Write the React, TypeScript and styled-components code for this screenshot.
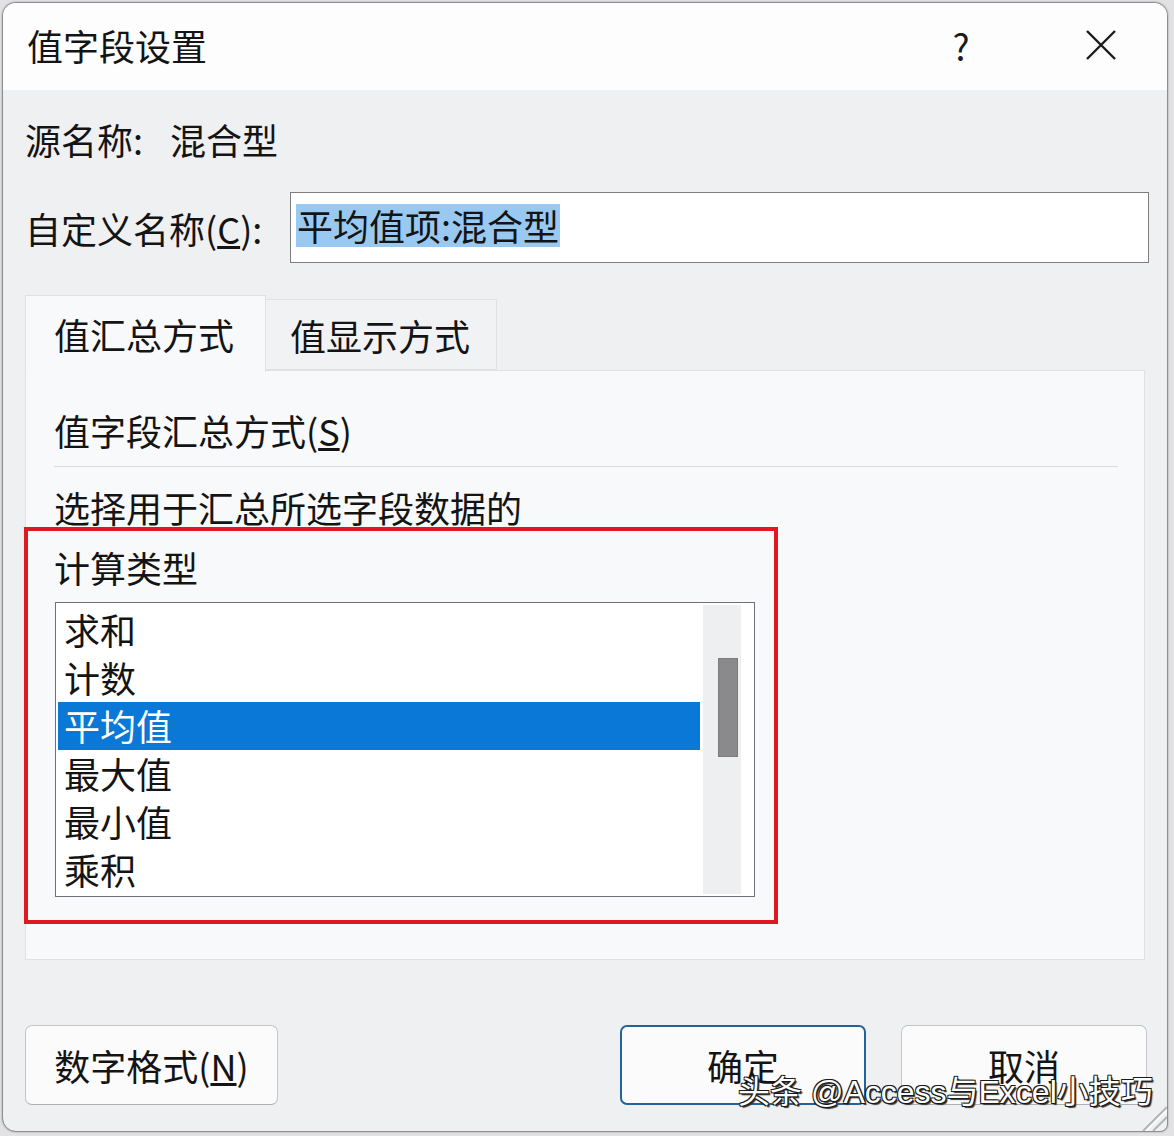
import * as React from "react";
import styled, { createGlobalStyle } from "styled-components";

const GlobalStyle = createGlobalStyle`
  html, body {
    margin: 0;
    padding: 0;
    background: #e2e2e5;
  }
  body {
    padding: 2px;
    font-family: "Noto Sans CJK SC", "Liberation Sans", sans-serif;
    color: #141414;
  }
`;

const items = ["求和", "计数", "平均值", "最大值", "最小值", "乘积"];

const Dialog = styled.div`
  position: relative;
  box-sizing: border-box;
  width: 1166px;
  height: 1130px;
  border: 1px solid #8d8d92;
  border-radius: 14px 14px 8px 14px;
  box-shadow: 0 0 2px rgba(0, 0, 0, 0.35);
  background: #eff0f2;
  overflow: hidden;
  display: flex;
  flex-direction: column;
  font-size: 36px;
`;

const TitleBar = styled.div`
  height: 87px;
  flex: 0 0 auto;
  background: #fdfdfd;
  display: flex;
  align-items: center;
  gap: 50px;
  padding: 0 21px 0 24px;
`;

const Title = styled.div`
  flex: 1;
  line-height: 1;
  margin-top: -4px;
`;

const TitleButton = styled.div`
  width: 90px;
  display: flex;
  justify-content: center;
  align-items: center;
  line-height: 1;
  color: #1a1a1a;
  margin-top: -3px;
`;

const Body = styled.div`
  flex: 1;
  display: flex;
  flex-direction: column;
  padding: 0 22px;
`;

const SourceRow = styled.div`
  margin-top: 19px;
  height: 60px;
  display: flex;
  align-items: center;
`;

const SourceLabel = styled.span`
  width: 145px;
`;

const CustomRow = styled.div`
  margin-top: 23px;
  margin-right: -4px;
  display: grid;
  grid-template-columns: 265px 1fr;
  align-items: center;
`;

const Input = styled.div`
  box-sizing: border-box;
  height: 71px;
  background: #ffffff;
  border: 1px solid #7d7d82;
  padding: 6px 0 0 5px;
`;

const Selected = styled.span`
  display: inline-block;
  background: #99c9f1;
  line-height: 43px;
  padding: 0 1px;
`;

const TabStrip = styled.div`
  margin-top: 32px;
  height: 75px;
  display: flex;
  align-items: flex-end;
  position: relative;
  z-index: 1;
`;

const Tab = styled.div<{ $active?: boolean }>`
  box-sizing: border-box;
  width: ${(p) => (p.$active ? 241 : 231)}px;
  height: ${(p) => (p.$active ? 77 : 71)}px;
  margin-bottom: ${(p) => (p.$active ? -2 : 0)}px;
  padding-left: ${(p) => (p.$active ? 28 : 24)}px;
  display: flex;
  align-items: center;
  background: ${(p) => (p.$active ? "#f8f9fa" : "#f1f2f4")};
  border: 1px solid ${(p) => (p.$active ? "#dfe0e2" : "#e0e1e3")};
  border-bottom: ${(p) => (p.$active ? "none" : "1px solid #e0e1e3")};
  border-left: ${(p) => (p.$active ? "1px solid #dfe0e2" : "none")};
`;

const Panel = styled.div`
  position: relative;
  box-sizing: border-box;
  height: 590px;
  background: #f8f9fa;
  border: 1px solid #e0e1e3;
  padding: 35px 26px 0 28px;
  display: flex;
  flex-direction: column;
`;

const Line = styled.div<{ $gap?: number }>`
  line-height: 48px;
  height: 48px;
  margin-top: ${(p) => p.$gap ?? 0}px;
  white-space: nowrap;
`;

const Separator = styled.div`
  margin-top: 12px;
  height: 1px;
  background: #d9dadc;
`;

const ListBox = styled.div`
  margin-top: 11px;
  box-sizing: border-box;
  width: 700px;
  height: 295px;
  margin-left: 1px;
  background: #ffffff;
  border: 1px solid #6f7079;
  display: flex;
  padding: 3px 0 0 2px;
`;

const ListItems = styled.div`
  width: 642px;
  display: flex;
  flex-direction: column;
`;

const ListItem = styled.div<{ $selected?: boolean }>`
  height: 48px;
  line-height: 47px;
  padding-left: 6px;
  background: ${(p) => (p.$selected ? "#0a78d6" : "transparent")};
  color: ${(p) => (p.$selected ? "#ffffff" : "#141414")};
`;

const ScrollTrack = styled.div`
  margin: -1px 0 2px 3px;
  width: 38px;
  background: #eeeff0;
  display: flex;
  justify-content: flex-end;
  padding-right: 3px;
  box-sizing: border-box;
`;

const ScrollThumb = styled.div`
  margin-top: 53px;
  width: 20px;
  height: 99px;
  background: #8a8a8c;
  border: 1px solid #7c7c7e;
  box-sizing: border-box;
`;

const Highlight = styled.div`
  position: absolute;
  left: -2px;
  top: 156px;
  width: 754px;
  height: 397px;
  box-sizing: border-box;
  border: 4px solid #e01820;
  pointer-events: none;
`;

const ButtonRow = styled.div`
  margin-top: 65px;
  display: flex;
  gap: 35px;
  margin-right: -2px;
`;

const Button = styled.div<{ $primary?: boolean; $w: number }>`
  box-sizing: border-box;
  width: ${(p) => p.$w}px;
  height: 80px;
  border-radius: 7px;
  background: #fbfbfc;
  border: ${(p) => (p.$primary ? "2px solid #22639f" : "1px solid #c4c5c8")};
  border-bottom-color: ${(p) => (p.$primary ? "#22639f" : "#aeafb2")};
  display: flex;
  align-items: center;
  justify-content: center;
  line-height: 1;
`;

const Spacer = styled.div`
  flex: 1;
`;

const Watermark = styled.div`
  position: absolute;
  left: 735px;
  top: 1069px;
  line-height: 40px;
  font-family: "Liberation Sans", "Noto Sans CJK SC", sans-serif;
  font-size: 32px;
  color: #ffffff;
  white-space: nowrap;
  text-shadow: 1px 1px 0 #1a1a1a, -1px -1px 0 #1a1a1a, 1px -1px 0 #1a1a1a,
    -1px 1px 0 #1a1a1a, 2px 2px 1px #333;
`;

const Grip = styled.svg`
  position: absolute;
  right: 0;
  bottom: 0;
`;

function CloseIcon() {
  return (
    <svg width="32" height="30" viewBox="0 0 32 30">
      <path d="M2 1 L30 29 M30 1 L2 29" stroke="#1a1a1a" strokeWidth="2.4" fill="none" />
    </svg>
  );
}

export default function App() {
  return (
    <>
      <GlobalStyle />
      <Dialog>
        <TitleBar>
          <Title>值字段设置</Title>
          <TitleButton>?</TitleButton>
          <TitleButton>
            <CloseIcon />
          </TitleButton>
        </TitleBar>
        <Body>
          <SourceRow>
            <SourceLabel>源名称:</SourceLabel>
            <span>混合型</span>
          </SourceRow>
          <CustomRow>
            <span>
              自定义名称(<u>C</u>):
            </span>
            <Input>
              <Selected>平均值项:混合型</Selected>
            </Input>
          </CustomRow>
          <TabStrip>
            <Tab $active>值汇总方式</Tab>
            <Tab>值显示方式</Tab>
          </TabStrip>
          <Panel>
            <Line>
              值字段汇总方式(<u>S</u>)
            </Line>
            <Separator />
            <Line $gap={16}>选择用于汇总所选字段数据的</Line>
            <Line $gap={12}>计算类型</Line>
            <ListBox>
              <ListItems>
                {items.map((item) => (
                  <ListItem key={item} $selected={item === "平均值"}>
                    {item}
                  </ListItem>
                ))}
              </ListItems>
              <ScrollTrack>
                <ScrollThumb />
              </ScrollTrack>
            </ListBox>
            <Highlight />
          </Panel>
          <ButtonRow>
            <Button $w={253}>
              数字格式(<u>N</u>)
            </Button>
            <Spacer />
            <Button $w={246} $primary>
              确定
            </Button>
            <Button $w={246}>取消</Button>
          </ButtonRow>
        </Body>
        <Watermark>头条 @Access与Excel小技巧</Watermark>
        <Grip width="30" height="30" viewBox="0 0 30 30">
          <path d="M6 30 L30 6" stroke="#b4b4b8" strokeWidth="2" />
          <path d="M16 30 L30 16" stroke="#b4b4b8" strokeWidth="2" />
          <path d="M9 30 L30 9" stroke="#ffffff" strokeWidth="1.5" />
        </Grip>
      </Dialog>
    </>
  );
}
